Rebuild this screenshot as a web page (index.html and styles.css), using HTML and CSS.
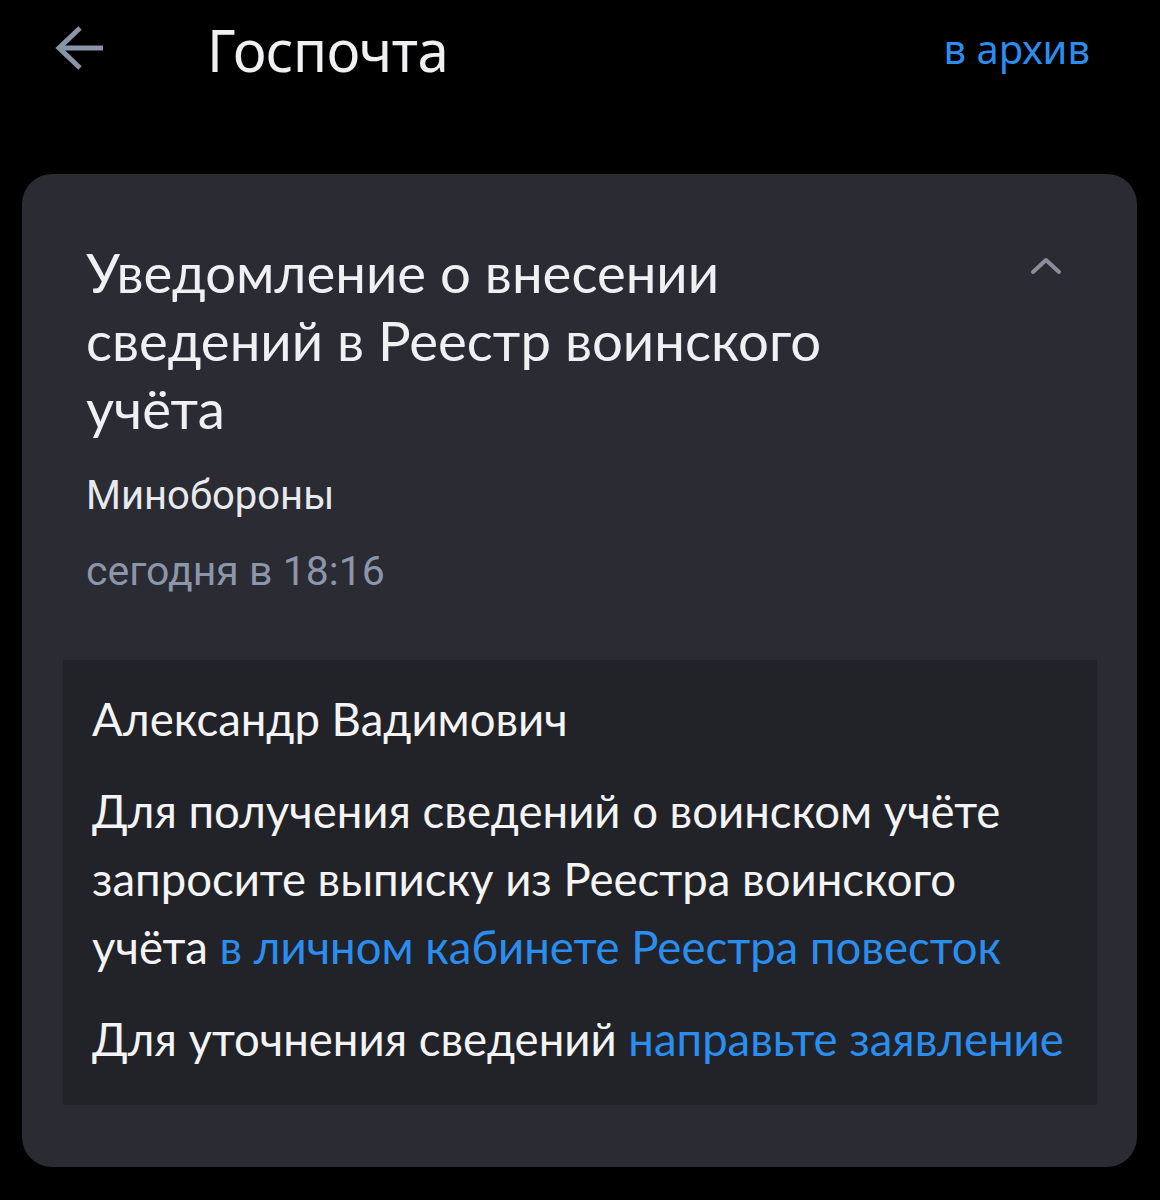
FILE: index.html
```html
<!DOCTYPE html>
<html lang="ru">
<head>
<meta charset="utf-8">
<title>Госпочта</title>
<link rel="stylesheet" href="styles.css">
</head>
<body>
<header class="topbar">
  <div class="topbar-left">
    <svg class="back" width="50" height="46" viewBox="0 0 50 46" aria-hidden="true">
      <path d="M27 3 L6 23 L27 43 M6 23 H50" fill="none" stroke="#8a94a8" stroke-width="5" stroke-linecap="butt" stroke-linejoin="miter"/>
    </svg>
    <h1 class="app-title">Госпочта</h1>
  </div>
  <a class="archive" href="#">в архив</a>
</header>

<main class="card">
  <section class="card-head">
    <div class="head-row">
      <h2 class="subject">Уведомление о внесении сведений в Реестр воинского учёта</h2>
      <svg class="chevron" width="32" height="20" viewBox="0 0 32 20" aria-hidden="true">
        <path d="M3 17 L16 5 L29 17" fill="none" stroke="#8b8e9a" stroke-width="4" stroke-linecap="round" stroke-linejoin="round"/>
      </svg>
    </div>
    <div class="sender">Минобороны</div>
    <div class="date">сегодня в 18:16</div>
  </section>

  <section class="message">
    <p class="greeting">Александр Вадимович</p>
    <p class="para">Для получения сведений о воинском учёте запросите выписку из Реестра воинского учёта <a href="#" class="link">в личном кабинете Реестра повесток</a></p>
    <p class="para">Для уточнения сведений <a href="#" class="link">направьте заявление</a></p>
  </section>
</main>
</body>
</html>
```

FILE: styles.css
```css
html, body {
  margin: 0;
  padding: 0;
  background: #000;
}

body {
  font-family: Lato, "Noto Sans", sans-serif;
  color: #f2f2f4;
}

.topbar {
  display: flex;
  align-items: center;
  justify-content: space-between;
  height: 100px;
  padding: 0 70px 0 53px;
  margin-bottom: 74px;
}

.topbar-left {
  display: flex;
  align-items: center;
}

.back {
  display: block;
  margin-top: -4px;
}

.app-title {
  margin: 0 0 0 104px;
  font-family: "Noto Sans", Lato, sans-serif;
  font-weight: 400;
  font-size: 58px;
  letter-spacing: -0.5px;
  color: #f0f0f2;
  line-height: 1;
  transform: scaleX(0.97);
  transform-origin: left center;
}

.archive {
  font-family: "Noto Sans", Lato, sans-serif;
  font-size: 40px;
  color: #2a8ef0;
  text-decoration: none;
  line-height: 1;
  margin-top: -2px;
}

.card {
  margin: 0 23px 0 22px;
  background: #2a2b33;
  border-radius: 30px;
  padding: 64px 40px 62px 41px;
}

.card-head {
  padding: 0 0 65px 23px;
}

.head-row {
  display: flex;
  justify-content: space-between;
  align-items: flex-start;
}

.subject {
  margin: 0;
  max-width: 780px;
  font-family: Lato, "Noto Sans", sans-serif;
  font-weight: 400;
  font-size: 54.5px;
  line-height: 68px;
  letter-spacing: 0;
  color: #f0f0f2;
}

.chevron {
  display: block;
  margin: 17px 35px 0 0;
}

.sender {
  margin-top: 30px;
  font-family: Roboto, "Noto Sans", sans-serif;
  font-size: 40px;
  line-height: 48px;
  color: #e8e9ec;
}

.date {
  margin-top: 27px;
  font-family: Roboto, "Noto Sans", sans-serif;
  font-size: 41px;
  line-height: 48px;
  color: #8c96aa;
}

.message {
  background: #222328;
  padding: 25px 22px 32px 29px;
}

.message p {
  margin: 0;
  font-size: 45.5px;
  line-height: 68px;
  color: #f4f4f6;
}

.message p + p {
  margin-top: 24px;
}

.link {
  color: #2a8ef0;
  text-decoration: none;
}
```
